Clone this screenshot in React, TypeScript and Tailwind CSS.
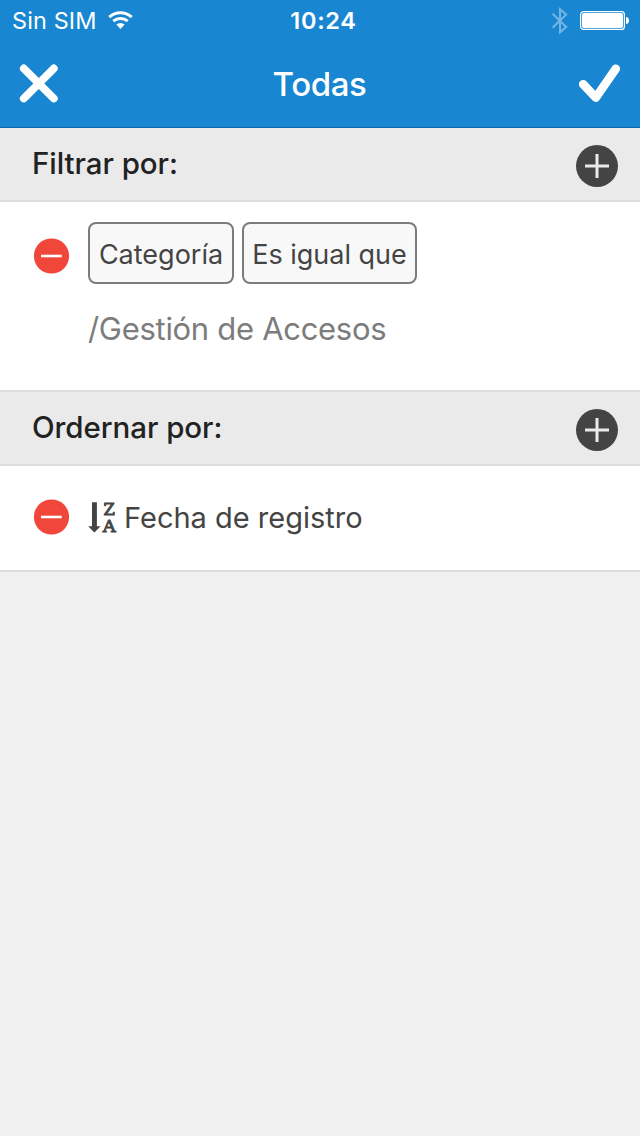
import type { ReactNode } from "react";

function WifiIcon() {
  return (
    <svg className="-mt-0.5" width="26" height="20" viewBox="0 0 26 20" fill="none" stroke="white" strokeWidth="3.1">
      <path d="M1.3 7.1 A16.7 16.7 0 0 1 23.7 7.1" />
      <path d="M5.3 11.2 A11 11 0 0 1 19.7 11.2" />
      <path d="M12.5 19 L8.4 14.6 A6 6 0 0 1 16.6 14.6 Z" fill="white" stroke="none" />
    </svg>
  );
}

function BluetoothIcon() {
  return (
    <svg width="18" height="28" viewBox="0 0 18 28" fill="none" stroke="#74b6e3" strokeWidth="2">
      <path d="M1.6 6.7 L15.2 20 L9 25.3 V2.2 L15.2 7.5 L1.6 20.8" />
    </svg>
  );
}

function BatteryIcon() {
  return (
    <svg width="49" height="20" viewBox="0 0 49 20">
      <rect x="0.6" y="0.6" width="43.8" height="17.8" rx="3" fill="none" stroke="white" strokeWidth="1.2" />
      <rect x="2" y="2" width="41" height="15" rx="2" fill="white" />
      <path d="M46 6 C48 6 49 7.5 49 9.5 C49 11.5 48 13 46 13 Z" fill="white" />
    </svg>
  );
}

function AddButton() {
  return (
    <button aria-label="Añadir" className="mt-[3px] h-[42px] w-[42px]">
      <svg width="42" height="42" viewBox="0 0 42 42">
        <circle cx="21" cy="21" r="21" fill="#444444" />
        <path d="M9 21 H33 M21 9 V33" stroke="#eaeaea" strokeWidth="3" />
      </svg>
    </button>
  );
}

function RemoveButton() {
  return (
    <button aria-label="Quitar" className="h-9 w-9">
      <svg width="36" height="36" viewBox="0 0 36 36">
        <circle cx="17.5" cy="18" r="17.6" fill="#f1473a" />
        <path d="M7 18 H27.7" stroke="white" strokeWidth="2.6" />
      </svg>
    </button>
  );
}

function SortDescIcon() {
  return (
    <svg width="30" height="34" viewBox="0 0 30 34" fill="#444444" aria-hidden="true" className="overflow-visible">
      <path d="M4 1.2 H8.9 V25.2 H12.6 L6.4 31.6 L0.2 25.2 H4 Z" />
      <g fontFamily="DejaVu Serif, serif" fontSize="16.5" stroke="#444444" strokeWidth="0.9">
        <text x="15.6" y="13.8" textLength="11.4" lengthAdjust="spacingAndGlyphs">Z</text>
        <text x="14.8" y="31.2" textLength="13" lengthAdjust="spacingAndGlyphs">A</text>
      </g>
    </svg>
  );
}

function SectionHeader({ children }: { children: ReactNode }) {
  return (
    <div className="flex h-[74px] items-center justify-between border-b-2 border-[#dcdcdc] bg-[#eaeaea] pr-[22px] pl-8 text-[29.5px] font-medium tracking-[-0.05px] text-[#222222]">
      {children}
      <AddButton />
    </div>
  );
}

function Chip({ children, className }: { children: ReactNode; className: string }) {
  return (
    <div className={`flex h-[62px] items-center justify-center rounded-lg border-2 border-[#7c7c7c] bg-[#f8f8f8] pt-[5px] text-[27px] whitespace-nowrap text-[#444444] ${className}`}>
      {children}
    </div>
  );
}

export default function App() {
  return (
    <div className="min-h-[1136px] w-[640px] bg-[#f1f1f1] font-['Inter',sans-serif]">
      <header className="h-32 border-b border-[#0c63ab] bg-[#1886d0] text-white">
        <div className="grid h-10 grid-cols-3 items-center pt-0.5 pr-[11px] pl-3">
          <div className="flex items-center gap-[11px] text-[23.5px] leading-8">
            <span className="tracking-[0.1px]">Sin SIM</span>
            <WifiIcon />
          </div>
          <div className="pl-1.5 text-center text-[23.5px] leading-8 font-semibold tracking-[0.7px]">10:24</div>
          <div className="flex items-center justify-end gap-[11px]">
            <BluetoothIcon />
            <BatteryIcon />
          </div>
        </div>
        <div className="flex h-[87px] items-center justify-between pr-[19px] pl-[19px]">
          <button aria-label="Cerrar" className="h-10 w-10">
            <svg width="40" height="40" viewBox="0 0 40 40" fill="none" stroke="white" strokeWidth="7.8" strokeLinecap="round">
              <path d="M4.8 4.4 L34.8 34.4 M34.8 4.4 L4.8 34.4" />
            </svg>
          </button>
          <h1 className="pt-0.5 pl-px text-[33px] font-medium tracking-[-0.4px]">Todas</h1>
          <button aria-label="Aceptar" className="h-10 w-[42px]">
            <svg width="42" height="40" viewBox="0 0 42 40" fill="none" stroke="white" strokeWidth="8.6" strokeLinecap="round" strokeLinejoin="round">
              <path d="M4.2 20.2 L16.8 33.6 L36.8 4.8" />
            </svg>
          </button>
        </div>
      </header>

      <SectionHeader><h2 className="-mt-0.5">Filtrar por:</h2></SectionHeader>
      <section className="flex h-[190px] gap-[18px] border-b-2 border-[#dcdcdc] bg-white pt-5 pl-[34px]">
        <div className="mt-4"><RemoveButton /></div>
        <div>
          <div className="flex gap-2">
            <Chip className="w-[146px]"><span>Categoría</span></Chip>
            <Chip className="w-[175px]"><span>Es igual que</span></Chip>
          </div>
          <p className="mt-[22px] text-[31px] leading-[45px] tracking-[-0.3px] text-[#7c7c7c]">/Gestión de Accesos</p>
        </div>
      </section>

      <SectionHeader><h2 className="-mt-0.5">Ordernar por:</h2></SectionHeader>
      <section className="flex h-[106px] items-center border-b-2 border-[#dcdcdc] bg-white pl-[34px]">
        <div className="-mt-0.5 mr-[18px] flex"><RemoveButton /></div>
        <SortDescIcon />
        <span className="ml-1.5 text-[29px] text-[#444444]">Fecha de registro</span>
      </section>
    </div>
  );
}
